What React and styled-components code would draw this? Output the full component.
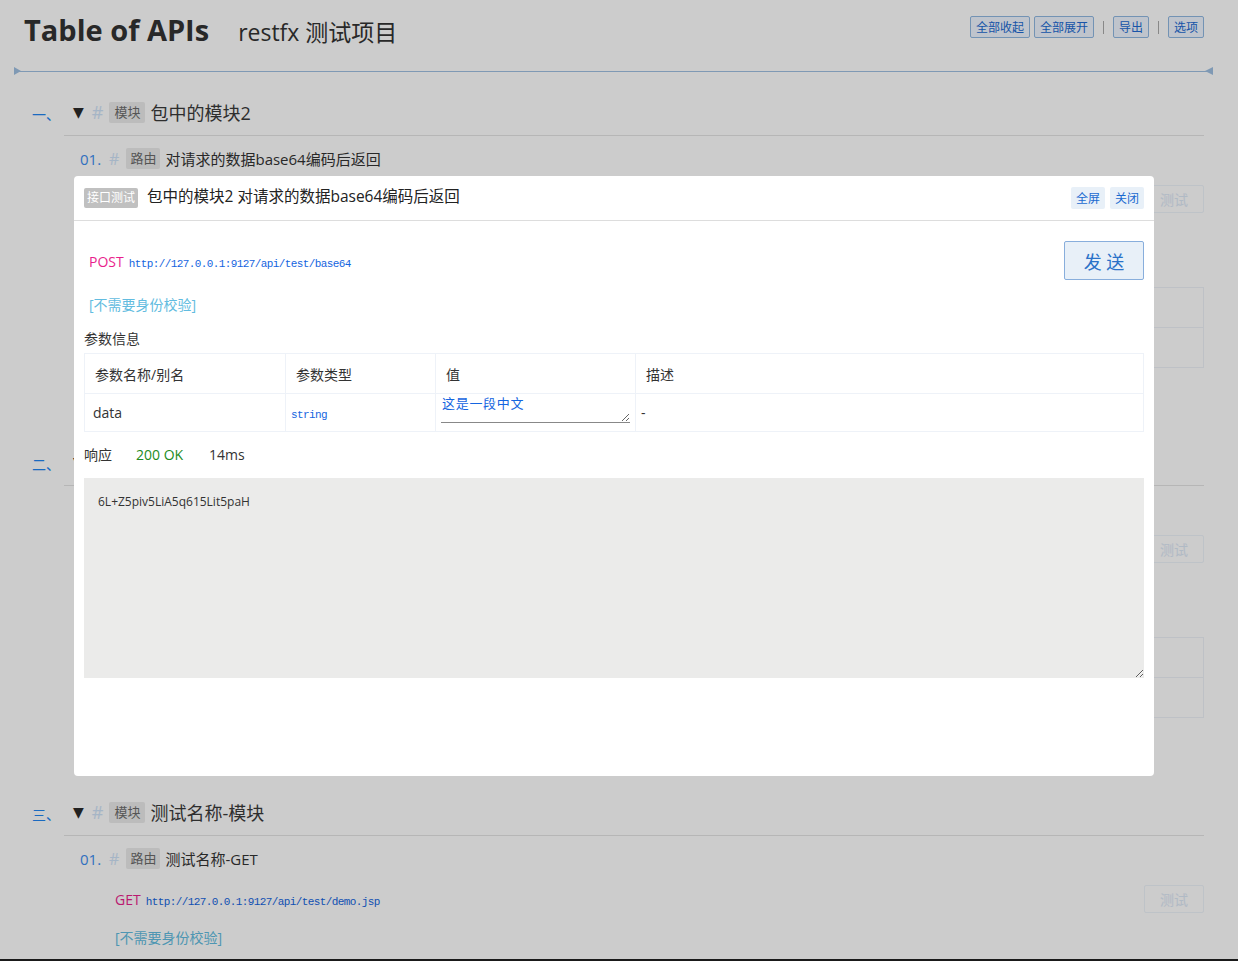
import React from 'react';
import styled, { createGlobalStyle } from 'styled-components';

const FONT = `"Open Sans", "Noto Sans CJK SC", sans-serif`;
const MONO = `"Liberation Mono", "Noto Sans CJK SC", monospace`;

const GlobalStyle = createGlobalStyle`
  html, body { margin: 0; padding: 0; background: #fff; height: 100%; overflow: hidden; }
  body { font-family: ${FONT}; color: #333; }
  * { box-sizing: border-box; }
`;

/* ---------- page header ---------- */
const Header = styled.header`
  display: flex;
  align-items: flex-start;
  justify-content: space-between;
  height: 71px;
  padding: 12px 34px 0 24px;
`;
const TitleGroup = styled.div`
  display: flex;
  align-items: baseline;
  gap: 29px;
`;
const H1 = styled.h1`
  margin: 0;
  font-size: 29px;
  font-weight: 700;
  line-height: 36px;
  color: #333;
`;
const SubTitle = styled.span`
  font-size: 23px;
  color: #333;
`;
const Toolbar = styled.div`
  display: flex;
  align-items: center;
  gap: 4px;
  margin-top: 4px;
`;
const ToolBtn = styled.button`
  height: 22px;
  padding: 0 5px;
  font-family: ${FONT};
  font-size: 12px;
  color: #2069d2;
  background: #eff6ff;
  border: 1px solid #90b8e2;
  border-radius: 2px;
`;
const Sep = styled.span`
  width: 1px;
  height: 13px;
  margin: 0 5px;
  background: #aaa;
`;
const Divider = styled.div`
  position: relative;
  height: 1px;
  margin: 0 25px 0 14px;
  background: #9fc0e2;
  &::before {
    content: '';
    position: absolute;
    left: 0;
    top: -4px;
    border-left: 7px solid #9fc0e2;
    border-top: 4.5px solid transparent;
    border-bottom: 4.5px solid transparent;
  }
  &::after {
    content: '';
    position: absolute;
    right: 0;
    top: -4px;
    border-right: 8px solid #9fc0e2;
    border-top: 4.5px solid transparent;
    border-bottom: 4.5px solid transparent;
  }
`;

/* ---------- sections ---------- */
const SectionList = styled.main`
  padding: 20px 34px 0 24px;
`;
const Section = styled.section`
  display: flex;
  margin-bottom: 74px;
`;
const SectionNo = styled.div`
  width: 40px;
  flex: none;
  padding: 13px 0 0 8px;
  line-height: 20px;
  font-size: 14px;
  color: #2185f0;
`;
const SectionBody = styled.div`
  flex: 1;
  min-width: 0;
`;
const SectionHead = styled.div`
  display: flex;
  align-items: center;
  height: 44px;
  padding: 0 0 3px 9px;
  border-bottom: 1px solid #e4e4e4;
`;
const Caret = styled.span`
  font-family: "DejaVu Sans", sans-serif;
  font-size: 14px;
  color: #2a2a2a;
  margin-right: 8px;
`;
const Hash = styled.span`
  font-size: ${p => (p.$small ? 16 : 18)}px;
  color: #cfe3f8;
  margin-right: ${p => (p.$small ? 7 : 6)}px;
`;
const Tag = styled.span`
  background: #ebebeb;
  color: #6b6b6b;
  font-size: 13px;
  line-height: 21px;
  padding: 0 ${p => (p.$small ? 4 : 5)}px;
  border-radius: 2px;
  margin-right: 5px;
`;
const HeadTitle = styled.span`
  font-size: 18px;
  color: #3a3a3a;
`;
const RouteTitle = styled.div`
  display: flex;
  align-items: center;
  height: 47px;
  padding: 0 0 2px 16px;
`;
const RouteNo = styled.span`
  font-size: 15px;
  color: #3d8ef0;
  margin-right: 8px;
`;
const RouteName = styled.span`
  font-size: 15px;
  color: #333;
`;
const RouteBody = styled.div`
  padding-left: 51px;
`;
const MethodRow = styled.div`
  display: flex;
  align-items: center;
  justify-content: space-between;
  height: 28px;
  margin-top: 2px;
`;
const Method = styled.span`
  font-size: 14px;
  color: #e91e8c;
  margin-right: 5px;
`;
const Url = styled.span`
  font-family: ${MONO};
  font-size: 11px;
  letter-spacing: -0.6px;
  color: #1565e0;
`;
const TestBtn = styled.button`
  width: 60px;
  height: 28px;
  font-family: ${FONT};
  font-size: 14px;
  color: #dde9f7;
  background: transparent;
  border: 1px solid #eef4fb;
  border-radius: 2px;
`;
const Auth = styled.div`
  margin-top: 15px;
  padding-left: ${p => p.$pl ?? 0}px;
  line-height: 20px;
  font-size: 14px;
  color: #62bce0;
`;
const Label = styled.div`
  margin-top: 14px;
  line-height: 20px;
  font-size: 14px;
  color: #333;
`;
const Table = styled.table`
  width: 100%;
  margin-top: ${p => p.$mt ?? 5}px;
  border-collapse: collapse;
  table-layout: fixed;
  font-size: 14px;
  color: #333;
`;
const Th = styled.th`
  height: 40px;
  padding: 0 10px;
  text-align: left;
  font-weight: 400;
  border: 1px solid #eef2f8;
`;
const Td = styled.td`
  height: ${p => p.$h ?? 38}px;
  padding: 0 ${p => p.$pad ?? 6}px;
  border: 1px solid #eef2f8;
  vertical-align: ${p => (p.$top ? 'top' : 'middle')};
  padding-top: ${p => (p.$top ? 1 : 0)}px;
`;
const TypeText = styled.span`
  font-family: ${MONO};
  font-size: 11px;
  letter-spacing: -0.6px;
  color: #1565e0;
`;

/* ---------- modal ---------- */
const Overlay = styled.div`
  position: fixed;
  inset: 0;
  background: rgba(0, 0, 0, 0.2);
  z-index: 10;
`;
const Modal = styled.div`
  position: fixed;
  left: 74px;
  top: 176px;
  width: 1080px;
  height: 600px;
  background: #fff;
  border-radius: 4px;
  z-index: 11;
  display: flex;
  flex-direction: column;
`;
const ModalHeader = styled.div`
  display: flex;
  align-items: center;
  height: 45px;
  padding: 0 10px;
  border-bottom: 1px solid #ddd;
`;
const ModalTag = styled.span`
  background: #c0c0c0;
  color: #fff;
  font-size: 12px;
  line-height: 20px;
  padding: 0 3px;
  border-radius: 2px;
  margin-right: 9px;
`;
const ModalTitle = styled.span`
  flex: 1;
  font-size: 15.5px;
  line-height: 20px;
  margin-bottom: 5px;
  color: #222;
`;
const HeadBtn = styled.button`
  height: 22px;
  padding: 0 5px;
  margin-left: 5px;
  margin-bottom: 1px;
  font-family: ${FONT};
  font-size: 12px;
  color: #1a6ad0;
  background: #e8f0f8;
  border: none;
  border-radius: 2px;
`;
const ModalBody = styled.div`
  padding: 20px 10px 0;
`;
const ReqRow = styled.div`
  display: flex;
  align-items: center;
  justify-content: space-between;
  height: 39px;
`;
const ReqLine = styled.div`
  padding-left: 5px;
`;
const SendBtn = styled.button`
  width: 80px;
  height: 39px;
  padding: 0;
  font-family: ${FONT};
  font-size: 18px;
  color: #2a72c8;
  background: #e8f0f8;
  border: 1px solid #88aedc;
  border-radius: 2px;
`;
const ValueInput = styled.textarea`
  display: block;
  width: 189px;
  height: 28px;
  margin: 0;
  padding: 0 1px;
  border: none;
  border-bottom: 1px solid #888;
  outline: none;
  overflow: hidden;
  font-family: ${FONT};
  font-size: 13px;
  letter-spacing: 0.7px;
  line-height: 16px;
  color: #1565e0;
  background: #fff;
`;
const RespRow = styled.div`
  display: flex;
  align-items: center;
  margin-top: 13px;
  line-height: 20px;
  font-size: 14px;
  color: #333;
`;
const RespLabel = styled.span`
  width: 52px;
`;
const Status = styled.span`
  color: #228b22;
  width: 73px;
`;
const RespBox = styled.textarea`
  display: block;
  width: 100%;
  height: 200px;
  margin: 13px 0 0;
  padding: 17px 14px 15px;
  border: none;
  outline: none;
  overflow: hidden;
  background: #ebebea;
  font-family: ${FONT};
  font-size: 12px;
  line-height: 14px;
  color: #333;
`;
const BottomEdge = styled.div`
  position: fixed;
  left: 0;
  right: 0;
  bottom: 0;
  height: 2px;
  background: #1a1a1a;
  z-index: 20;
`;

const sections = [
  {
    no: '一、', title: '包中的模块2', route: '对请求的数据base64编码后返回',
    method: 'POST', url: 'http://127.0.0.1:9127/api/test/base64', param: 'data',
  },
  {
    no: '二、', title: '包中的模块', route: '获取数据列表',
    method: 'GET', url: 'http://127.0.0.1:9127/api/test/list', param: 'page',
  },
  {
    no: '三、', title: '测试名称-模块', route: '测试名称-GET',
    method: 'GET', url: 'http://127.0.0.1:9127/api/test/demo.jsp', param: 'id',
  },
];

function ParamTable({ mt, children }) {
  return (
    <Table $mt={mt}>
      <colgroup>
        <col style={{ width: 201 }} />
        <col style={{ width: 150 }} />
        <col style={{ width: 200 }} />
        <col />
      </colgroup>
      <thead>
        <tr>
          <Th>参数名称/别名</Th>
          <Th>参数类型</Th>
          <Th>值</Th>
          <Th>描述</Th>
        </tr>
      </thead>
      <tbody>{children}</tbody>
    </Table>
  );
}

export default function App() {
  return (
    <>
      <GlobalStyle />
      <Header>
        <TitleGroup>
          <H1>Table of APIs</H1>
          <SubTitle>restfx 测试项目</SubTitle>
        </TitleGroup>
        <Toolbar>
          <ToolBtn>全部收起</ToolBtn>
          <ToolBtn>全部展开</ToolBtn>
          <Sep />
          <ToolBtn>导出</ToolBtn>
          <Sep />
          <ToolBtn>选项</ToolBtn>
        </Toolbar>
      </Header>
      <Divider />
      <SectionList>
        {sections.map(s => (
          <Section key={s.no}>
            <SectionNo>{s.no}</SectionNo>
            <SectionBody>
              <SectionHead>
                <Caret>▼</Caret>
                <Hash>#</Hash>
                <Tag>模块</Tag>
                <HeadTitle>{s.title}</HeadTitle>
              </SectionHead>
              <RouteTitle>
                <RouteNo>01.</RouteNo>
                <Hash $small>#</Hash>
                <Tag $small>路由</Tag>
                <RouteName>{s.route}</RouteName>
              </RouteTitle>
              <RouteBody>
                <MethodRow>
                  <div>
                    <Method>{s.method}</Method>
                    <Url>{s.url}</Url>
                  </div>
                  <TestBtn>测试</TestBtn>
                </MethodRow>
                <Auth>[不需要身份校验]</Auth>
                <Label>参数信息</Label>
                <ParamTable>
                  <tr>
                    <Td $h={40} $pad={8}>{s.param}</Td>
                    <Td $h={40} $pad={5}><TypeText>string</TypeText></Td>
                    <Td $h={40} $pad={5}>-</Td>
                    <Td $h={40}>-</Td>
                  </tr>
                </ParamTable>
              </RouteBody>
            </SectionBody>
          </Section>
        ))}
      </SectionList>

      <Overlay />
      <Modal>
        <ModalHeader>
          <ModalTag>接口测试</ModalTag>
          <ModalTitle>包中的模块2 对请求的数据base64编码后返回</ModalTitle>
          <HeadBtn>全屏</HeadBtn>
          <HeadBtn>关闭</HeadBtn>
        </ModalHeader>
        <ModalBody>
          <ReqRow>
            <ReqLine>
              <Method>POST</Method>
              <Url>http://127.0.0.1:9127/api/test/base64</Url>
            </ReqLine>
            <SendBtn>发 送</SendBtn>
          </ReqRow>
          <Auth $pl={5}>[不需要身份校验]</Auth>
          <Label>参数信息</Label>
          <ParamTable mt={4}>
            <tr>
              <Td $pad={8}>data</Td>
              <Td $pad={5}><TypeText>string</TypeText></Td>
              <Td $pad={5} $top>
                <ValueInput defaultValue="这是一段中文" />
              </Td>
              <Td $pad={5}>-</Td>
            </tr>
          </ParamTable>
          <RespRow>
            <RespLabel>响应</RespLabel>
            <Status>200 OK</Status>
            <span>14ms</span>
          </RespRow>
          <RespBox readOnly defaultValue="6L+Z5piv5LiA5q615Lit5paH" />
        </ModalBody>
      </Modal>
      <BottomEdge />
    </>
  );
}
